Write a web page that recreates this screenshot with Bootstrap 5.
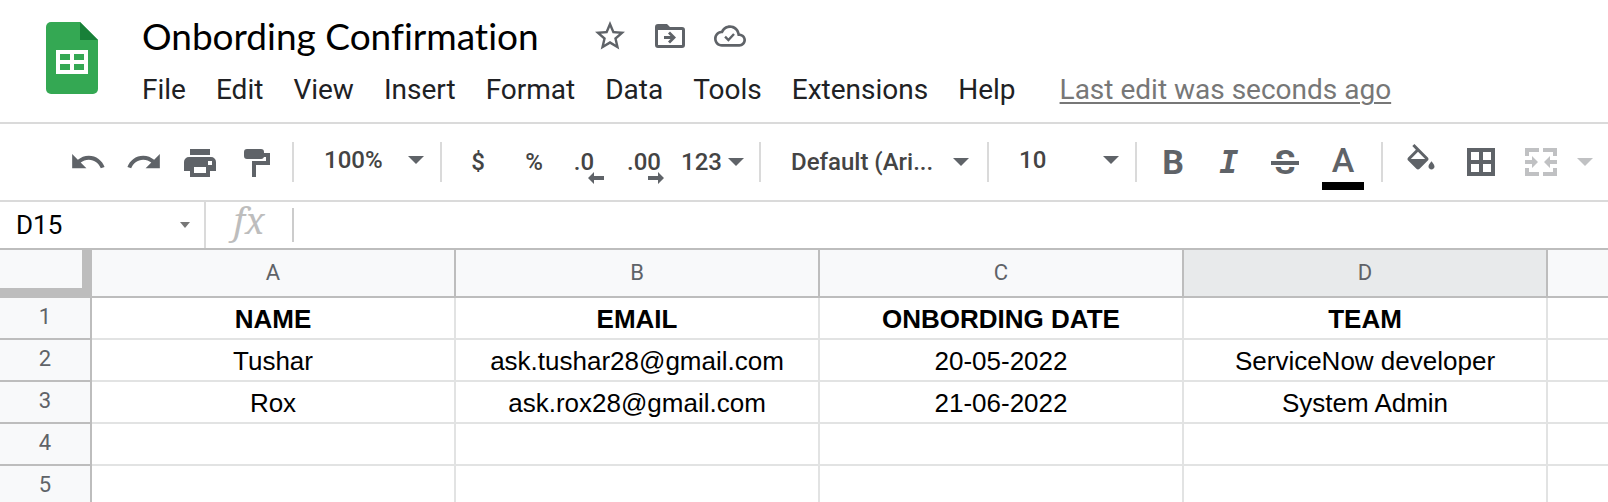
<!DOCTYPE html>
<html lang="en">
<head>
<meta charset="utf-8">
<meta name="viewport" content="width=device-width, initial-scale=1">
<title>Onbording Confirmation</title>
<link href="https://cdn.jsdelivr.net/npm/bootstrap@5.3.0/dist/css/bootstrap.min.css" rel="stylesheet">
<style>
  :root { --icon: #5f6368; --line: #dadada; --rule: #bdbdbd; }
  body { font-family: Roboto, "Liberation Sans", sans-serif; color: #202124; }
  button, input, select { font-family: inherit; font-weight: inherit; color: inherit; background: none; border: 0; padding: 0; }
  svg { display: block; fill: currentColor; flex: none; }

  .doc-header { padding: 10px 46px 16px; }
  .doc-logo { margin-top: 12px; }
  .doc-main { padding-left: 44px; }
  .doc-title { font-family: Lato, "Open Sans", sans-serif; font-variant-ligatures: none; font-size: 37px; line-height: 48px; height: 48px; width: 438px; color: #000; }
  .title-icon { width: 60px; height: 52px; color: var(--icon); }
  .menu-bar { gap: 30px; font-size: 28px; line-height: 32px; margin-top: 12px; }
  .menu-bar a { color: inherit; text-decoration: none; white-space: nowrap; }
  .menu-bar .last-edit { color: #777; text-decoration: underline; text-decoration-thickness: 2px; text-underline-offset: 3px; margin-left: 14px; }

  .tool-bar { height: 80px; border-top: 2px solid var(--line); border-bottom: 2px solid var(--line); padding-left: 60px; color: var(--icon); font-size: 24px; font-weight: 500; overflow: hidden; }
  .tool { width: 56px; height: 56px; flex: none; position: relative; }
  .tool-wide { width: 60px; }
  .tool-text { color: #444; }
  .tool-more { width: 28px; }
  .format-more { width: 77px; gap: 6px; }
  .divider { width: 2px; height: 40px; margin: 0 8px; background: var(--line); flex: none; }
  .picker { appearance: none; flex: none; width: 130px; height: 40px; padding-left: 22px; color: #444;
    background: url("data:image/svg+xml,%3Csvg xmlns='http://www.w3.org/2000/svg' width='16' height='8'%3E%3Cpath d='M0 0h16l-8 8z' fill='%235f6368'/%3E%3C/svg%3E") no-repeat right 8px center; }
  .picker-num { margin-bottom: 4px; }
  .picker-font { width: 210px; background-position: right 10px center; }
  .nudge { position: absolute; top: 38px; left: 26px; color: var(--icon); }
  .nudge-right { left: 30px; }
  .decimal { padding-right: 12px; }
  .decimal-two { padding-right: 4px; }
  .letter { font-size: 34px; line-height: 40px; font-weight: 700; }
  .letter-slant { font-family: "DejaVu Sans Mono", monospace; font-style: italic; font-size: 32px; }
  .letter-strike { position: relative; }
  .letter-strike::after { content: ""; position: absolute; left: -4px; right: -4px; top: 19px; height: 4px; background: var(--icon); box-shadow: 0 2px #fff, 0 -2px #fff; }
  .text-colour { border-bottom: 8px solid #000; width: 42px; height: 48px; line-height: 36px; font-weight: 500; }

  .formula-bar { height: 48px; border-bottom: 2px solid var(--rule); }
  .name-box { width: 204px; padding: 0 14px 0 16px; }
  .name-input { width: 120px; font-size: 26px; color: #000; }
  .name-arrow { color: #777; }
  .fx-mark { width: 86px; padding-bottom: 8px; font-family: "Noto Serif", "Liberation Serif", serif; font-style: italic; font-size: 36px; line-height: 38px; color: #bdbdbd; }
  .short-rule { width: 2px; height: 34px; background: #ccc; }
  .full-rule { width: 2px; background: var(--line); }

  .sheet { table-layout: fixed; border-collapse: separate; border-spacing: 0; width: 100%; font-family: "Liberation Sans", Arial, sans-serif; font-size: 26px; line-height: 30px; color: #000; }
  .sheet .col-rows { width: 92px; }
  .sheet .col-data { width: 364px; }
  .sheet th, .sheet td { padding: 0; text-align: center; border: 0 solid #e2e3e3; border-width: 0 2px 2px 0; white-space: nowrap; }
  .sheet td { height: 42px; padding-top: 2px; }
  .sheet thead th, .sheet tbody th { font-family: Roboto, sans-serif; font-size: 22px; font-weight: 400; color: #5f6368; background: #f8f9fa; border-color: var(--rule); }
  .sheet thead th { height: 48px; }
  .sheet thead .corner { border-width: 0 10px 10px 0; }
  .sheet thead .active-col { background: #e8eaeb; }
  .sheet tbody th { padding-bottom: 2px; }
  .sheet tr > :last-child { border-right-width: 0; }
  .sheet .title-row td { font-weight: 700; }
</style>
</head>
<body class="bg-white vh-100 overflow-hidden d-flex flex-column">

<header class="doc-header d-flex">
  <a href="#" class="doc-logo" aria-label="Sheets home">
    <svg width="52" height="72" viewBox="0 0 52 72">
      <path fill="#34a853" d="M5 0h29l18 18v49a5 5 0 0 1-5 5H5a5 5 0 0 1-5-5V5a5 5 0 0 1 5-5z"/>
      <path fill="#188038" d="M34 0l18 18H34z"/>
      <path fill="#fff" fill-rule="evenodd" d="M10 28h32v24H10zM14 32v6h10v-6zM28 32v6h10v-6zM14 42v6h10v-6zM28 42v6h10v-6z"/>
    </svg>
  </a>
  <div class="doc-main flex-grow-1">
    <div class="d-flex align-items-center">
      <input class="doc-title" type="text" value="Onbording Confirmation" aria-label="Document title">
      <button class="title-icon d-flex align-items-center justify-content-center" aria-label="Star">
        <svg width="36" height="36" viewBox="0 0 24 24"><path d="M22 9.24l-7.19-.62L12 2 9.19 8.63 2 9.24l5.46 4.73L5.82 21 12 17.27 18.18 21l-1.63-7.03L22 9.24zM12 15.4l-3.76 2.27 1-4.28-3.32-2.88 4.38-.38L12 6.1l1.71 4.04 4.38.38-3.32 2.88 1 4.28L12 15.4z"/></svg>
      </button>
      <button class="title-icon d-flex align-items-center justify-content-center" aria-label="Move">
        <svg width="30" height="24" viewBox="0 0 30 24"><path fill-rule="evenodd" d="M3 0h9l3 3h12a3 3 0 0 1 3 3v15a3 3 0 0 1-3 3H3a3 3 0 0 1-3-3V3a3 3 0 0 1 3-3zM3 6v15h24V6zM9 12h6.500l-2.500-2.500L15 7.500l6 6-6 6-2-2 2.500-2.500H9z"/></svg>
      </button>
      <button class="title-icon d-flex align-items-center justify-content-center" aria-label="Document status">
        <svg width="32" height="32" viewBox="0 0 24 24"><path d="M19.35 10.04C18.67 6.59 15.64 4 12 4 9.11 4 6.6 5.64 5.35 8.04 2.34 8.36 0 10.91 0 14c0 3.31 2.69 6 6 6h13c2.76 0 5-2.24 5-5 0-2.64-2.05-4.78-4.65-4.96zM19 18H6c-2.21 0-4-1.79-4-4 0-2.05 1.53-3.76 3.56-3.97l1.07-.11.5-.95C8.08 7.14 9.94 6 12 6c2.62 0 4.88 1.86 5.39 4.43l.3 1.5 1.53.11c1.56.1 2.78 1.41 2.78 2.96 0 1.65-1.35 3-3 3z"/><path fill="none" stroke="currentColor" stroke-width="1.800" d="M8.300 12.500l2.500 2.500 4.200-4.500"/></svg>
      </button>
    </div>
    <nav class="menu-bar d-flex" aria-label="Menu">
      <a href="#">File</a><a href="#">Edit</a><a href="#">View</a><a href="#">Insert</a><a href="#">Format</a><a href="#">Data</a><a href="#">Tools</a><a href="#">Extensions</a><a href="#">Help</a>
      <a href="#" class="last-edit">Last edit was seconds ago</a>
    </nav>
  </div>
</header>

<div class="tool-bar d-flex align-items-center flex-shrink-0" role="toolbar" aria-label="Formatting">
  <button class="tool d-flex align-items-center justify-content-center" aria-label="Undo"><svg width="38" height="38" viewBox="0 0 24 24"><path d="M12.500 8c-2.650 0-5.050.99-6.900 2.600L2 7v9h9l-3.620-3.620c1.390-1.160 3.160-1.880 5.120-1.880 3.540 0 6.550 2.310 7.600 5.500l2.370-.78C21.080 11.030 17.150 8 12.500 8z"/></svg></button>
  <button class="tool d-flex align-items-center justify-content-center" aria-label="Redo"><svg width="38" height="38" viewBox="0 0 24 24"><path d="M18.400 10.600C16.550 8.990 14.150 8 11.500 8c-4.650 0-8.580 3.030-9.960 7.220L3.900 16c1.050-3.190 4.050-5.500 7.600-5.500 1.950 0 3.730.72 5.120 1.880L13 16h9V7l-3.600 3.600z"/></svg></button>
  <button class="tool d-flex align-items-center justify-content-center" aria-label="Print"><svg width="36" height="36" viewBox="0 0 36 36"><path fill-rule="evenodd" d="M8 5h20v6H8zM7 13h22a5 5 0 0 1 5 5v9h-6v6H8v-6H2v-9a5 5 0 0 1 5-5zM12 23v6h12v-6zM26 17v4h4v-4z"/></svg></button>
  <button class="tool d-flex align-items-center justify-content-center" aria-label="Paint format"><svg width="36" height="36" viewBox="0 0 36 36"><path d="M9 5h14a3 3 0 0 1 3 3v1h6v12H18v12h-4V17h14v-4h-2a3 3 0 0 1-3 2H9a3 3 0 0 1-3-3V8a3 3 0 0 1 3-3z"/></svg></button>
  <div class="divider"></div>
  <select class="picker picker-num" aria-label="Zoom"><option>100%</option></select>
  <div class="divider"></div>
  <button class="tool tool-text" aria-label="Format as currency">$</button>
  <button class="tool tool-text" aria-label="Format as percent">%</button>
  <button class="tool tool-text decimal" aria-label="Decrease decimal places">.0<svg class="nudge" width="16" height="12"><path d="M0 6l6-6v4h10v4H6v4z"/></svg></button>
  <button class="tool tool-text decimal-two" aria-label="Increase decimal places">.00<svg class="nudge nudge-right" width="16" height="12"><path d="M16 6l-6-6v4H0v4h10v4z"/></svg></button>
  <button class="tool tool-text format-more d-flex align-items-center justify-content-center" aria-label="More formats">123<svg width="16" height="8"><path fill="#5f6368" d="M0 0h16l-8 8z"/></svg></button>
  <div class="divider"></div>
  <select class="picker picker-font" aria-label="Font"><option>Default (Ari...</option></select>
  <div class="divider"></div>
  <select class="picker picker-num" aria-label="Font size"><option>10</option></select>
  <div class="divider"></div>
  <button class="tool letter" aria-label="Bold">B</button>
  <button class="tool letter letter-slant" aria-label="Italic">I</button>
  <button class="tool letter" aria-label="Strikethrough"><span class="letter-strike">S</span></button>
  <button class="tool tool-wide letter d-flex align-items-end justify-content-center" aria-label="Text color"><span class="text-colour">A</span></button>
  <div class="divider"></div>
  <button class="tool tool-wide d-flex align-items-center justify-content-center" aria-label="Fill color"><svg width="36" height="36" viewBox="0 0 24 24"><path d="M16.560 8.940L7.620 0 6.210 1.410l2.380 2.380-5.150 5.150c-.59.59-.59 1.540 0 2.120l5.500 5.500c.29.29.68.44 1.060.44s.77-.15 1.060-.44l5.500-5.500c.59-.58.59-1.530 0-2.120zM5.210 10L10 5.210 14.790 10H5.210zM19 11.500s-2 2.170-2 3.500c0 1.100.9 2 2 2s2-.9 2-2c0-1.330-2-3.500-2-3.500z"/></svg></button>
  <button class="tool tool-wide d-flex align-items-center justify-content-center" aria-label="Borders"><svg width="28" height="28"><path fill-rule="evenodd" d="M0 0h28v28H0zM4 4v8h8V4zM16 4v8h8V4zM4 16v8h8v-8zM16 16v8h8v-8z"/></svg></button>
  <button class="tool tool-wide d-flex align-items-center justify-content-center" aria-label="Merge cells" disabled><svg width="32" height="28"><path fill="#c0c1c3" d="M0 0h14v4H4v4H0zM18 0h14v8h-4V4H18zM0 20h4v4h10v4H0zM28 20h4v8H18v-4h10zM0 12h7V8l6 6-6 6v-4H0zM32 12h-7V8l-6 6 6 6v-4h7z"/></svg></button>
  <button class="tool tool-more d-flex align-items-center justify-content-center" aria-label="Merge options" disabled><svg width="16" height="8"><path fill="#c0c1c3" d="M0 0h16l-8 8z"/></svg></button>
</div>

<div class="formula-bar d-flex align-items-center flex-shrink-0">
  <div class="name-box d-flex align-items-center justify-content-between">
    <input class="name-input" type="text" value="D15" aria-label="Name box">
    <button class="name-arrow" aria-label="Named ranges"><svg width="10" height="6"><path d="M0 0h10L5 6z"/></svg></button>
  </div>
  <div class="full-rule align-self-stretch"></div>
  <label for="formula" class="fx-mark text-center">fx</label>
  <div class="short-rule"></div>
  <input id="formula" type="text" class="flex-grow-1 px-3">
</div>

<main class="flex-grow-1 overflow-hidden">
  <table class="sheet">
    <colgroup><col class="col-rows"><col class="col-data"><col class="col-data"><col class="col-data"><col class="col-data"><col></colgroup>
    <thead>
      <tr><th class="corner"></th><th scope="col">A</th><th scope="col">B</th><th scope="col">C</th><th scope="col" class="active-col">D</th><th></th></tr>
    </thead>
    <tbody>
      <tr class="title-row"><th scope="row">1</th><td>NAME</td><td>EMAIL</td><td>ONBORDING DATE</td><td>TEAM</td><td></td></tr>
      <tr><th scope="row">2</th><td>Tushar</td><td>ask.tushar28@gmail.com</td><td>20-05-2022</td><td>ServiceNow developer</td><td></td></tr>
      <tr><th scope="row">3</th><td>Rox</td><td>ask.rox28@gmail.com</td><td>21-06-2022</td><td>System Admin</td><td></td></tr>
      <tr><th scope="row">4</th><td></td><td></td><td></td><td></td><td></td></tr>
      <tr><th scope="row">5</th><td></td><td></td><td></td><td></td><td></td></tr>
    </tbody>
  </table>
</main>

<script src="https://cdn.jsdelivr.net/npm/bootstrap@5.3.0/dist/js/bootstrap.bundle.min.js"></script>
</body>
</html>
